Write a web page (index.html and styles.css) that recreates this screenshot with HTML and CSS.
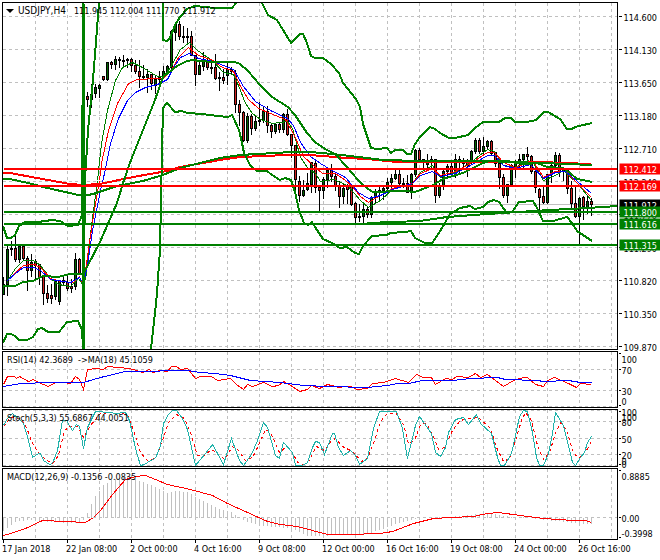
FILE: index.html
```html
<!DOCTYPE html>
<html lang="en">
<head>
  <meta charset="UTF-8" />
  <meta name="viewport" content="width=device-width, initial-scale=1.0" />
  <title>USDJPY,H4</title>
  <link rel="stylesheet" href="styles.css">
</head>
<body>
  <main class="chart">
    <section class="panel price">
      <div class="plot">
        <h1 class="caption"><svg class="arrow" viewBox="0 0 8 4"><path d="M0 0H8L4 4Z" /></svg><span class="symbol">USDJPY,H4</span> <span>111.945 112.004 111.770 111.912</span></h1>
        <svg class="canvas" viewBox="2.5 2.5 614 346" preserveAspectRatio="none">
          <g class="grid" data-rows="16,49,82,115,148,181,214,247,280,313,346"></g>
          <path class="bid" d="M3 204H618" />
          <g id="candles"></g>
          <!-- moving averages -->
          <polyline class="thin green" points="7,280 15,268 23,260 33,260 40,265 50,278 58,284 70,286 78,278 83,285 86,273 90,233 97,180 101,143 107,110 115,80 122,67 132,62 142,67 157,76 163,76 170,67 180,49 189,42 197,50 213,61 223,72 233,74 238,85 245,103 252,113 260,119 272,123 287,121 292,128 300,157 307,167 315,173 320,181 333,179 347,185 360,200 368,207 380,200 393,188 412,183 420,172 432,165 440,177 455,172 470,162 487,149 494,151 503,165 515,167 528,160 533,163 543,180 555,175 563,170 577,183 591,200" />
          <polyline class="thin red" points="7,280 15,272 23,265 33,264 40,267 50,278 60,281 73,282 79,276 83,285 87,256 93,215 99,180 101,163 108,130 117,103 128,83 137,79 157,78 163,78 172,68 178,57 188,47 198,55 213,60 220,66 233,71 240,86 248,99 258,108 270,113 285,119 293,133 303,156 313,165 322,173 335,173 345,180 352,186 360,196 368,202 378,196 392,188 412,183 420,173 432,168 440,175 455,171 470,163 487,152 494,152 503,162 515,167 528,162 534,163 543,177 555,171 565,171 577,183 591,197" />
          <polyline class="thin blue" points="7,280 15,273 23,267 33,267 40,270 50,279 70,282 79,277 83,283 87,265 92,230 100,190 104,173 110,143 118,118 127,100 135,92 145,87 157,84 167,79 173,67 180,57 189,53 198,58 213,61 233,69 243,86 255,101 270,110 287,118 293,125 300,142 310,156 320,163 330,169 345,177 358,192 368,198 380,195 392,189 412,183 420,175 432,171 440,176 455,173 470,165 487,155 494,155 503,165 515,168 530,164 543,178 555,172 565,171 577,181 591,193" />
          <g transform="translate(-.5 -.5)">
            <polyline class="thick red" points="3,173 10,173 37,178 70,184 83,185 100,184 133,177 167,171 180,167 220,160 240,157 287,155 310,155 347,158 367,159 397,162 480,162 540,162 591,164" />
            <polyline class="thick green" points="3,179 10,179 28,183 43,187 83,196 93,194 117,186 143,181 163,175 180,168 200,163 220,158 240,155 292,152 310,152 333,154 367,158 383,160 420,161 483,161 543,163 592,165" />
            <!-- Bollinger bands -->
            <polyline class="thick green" points="3,226 7,238 11,238 15,235 19,226 25,222 38,222 52,220 60,221 68,226 78,225 82,215 83,3" />
            <polyline class="thick green" points="84,275 85,180 88,130 93,80 99,3" />
            <polyline class="thick green" points="163,3 163,40 167,41 170,38 175,25 180,17 187,9 195,6 215,8 232,8 236,3" />
            <polyline class="thick green" points="262,3 268,15 277,20 291,43 300,34 303,34 307,43 311,56 315,58 323,58 331,64 339,73 343,83 356,99 360,107 363,124 371,148 377,149 387,148 391,153 395,150 403,150 407,154 411,154 415,144 420,137 430,127 435,129 440,133 449,138 455,138 468,135 475,128 483,122 499,122 505,118 511,118 515,122 527,122 536,120 544,112 548,112 560,119 567,129 572,129 575,127 592,123" />
            <polyline class="thick green" points="3,286 15,286 23,282 33,281 43,276 58,277 70,274 83,274 87,267 100,242 117,203 124,180 131,160 143,130 155,100 163,77 168,73 177,66 187,61 193,60 200,61 213,62 235,62 240,64 248,71 260,85 272,97 288,107 295,115 307,133 315,142 325,149 335,154 347,167 358,180 368,189 373,192 400,191 405,191 415,192 433,185 443,179 463,173 473,168 483,163 490,161 507,161 517,163 527,164 537,163 547,167 563,168 570,173 577,179 583,180 592,182" />
            <polyline class="thick green" points="3,343 7,334 11,334 15,336 19,340 27,340 33,337 38,329 42,328 48,332 59,332 67,322 78,321 82,330 83,348" />
            <polyline class="thick green" points="151,349 155,313 157,293 160,250 161,200 162,150 163,108 167,103 175,112 182,111 187,113 202,114 218,116 228,117 232,115 234,119 239,130 242,143 244,153 250,165 257,171 267,171 272,175 280,180 285,178 291,180 295,192 299,210 304,223 308,225 312,222 315,227 323,239 332,243 340,248 347,247 355,253 359,254 363,246 372,236 387,235 390,233 405,232 411,231 415,238 425,243 432,243 435,239 442,228 450,214 460,208 470,206 475,209 483,207 488,202 494,200 499,202 504,209 507,213 512,212 519,202 533,201 537,208 543,221 553,221 567,217 572,223 577,231 592,241" />
            <path class="thick green" d="M367 223L420 221L447 217L487 214L550 210L587 208L618 206" />
          </g>
          <path class="spike" d="M83 3V349" />
          <!-- support and resistance -->
          <path class="thick red" d="M3 168H618M3 185H618" />
          <path class="thick green" d="M3 211H618M3 223H618M3 244H618" />
        </svg>
      </div>
      <svg class="scale" viewBox="617.5 1.5 42 348">
        <path class="tick" d="M618 16h3M618 49h3M618 82h3M618 115h3M618 148h3M618 181h3M618 214h3M618 247h3M618 280h3M618 313h3M618 346h3" />
        <text x="623" y="20">114.600</text>
        <text x="623" y="53">114.130</text>
        <text x="623" y="86">113.650</text>
        <text x="623" y="119">113.180</text>
        <text x="623" y="152">112.710</text>
        <text x="623" y="185">112.240</text>
        <text x="623" y="218">111.770</text>
        <text x="623" y="251">111.290</text>
        <text x="623" y="284">110.820</text>
        <text x="623" y="317">110.350</text>
        <text x="623" y="350">109.870</text>
        <rect class="fill-black" x="619" y="199" width="42" height="11" />
        <text class="tag" x="623" y="208">111.912</text>
        <rect class="fill-red" x="619" y="163" width="42" height="11" />
        <text class="tag" x="623" y="172">112.412</text>
        <rect class="fill-red" x="619" y="180" width="42" height="11" />
        <text class="tag" x="623" y="189">112.169</text>
        <rect class="fill-green" x="619" y="206" width="42" height="11" />
        <text class="tag" x="623" y="215">111.800</text>
        <rect class="fill-green" x="619" y="218" width="42" height="11" />
        <text class="tag" x="623" y="227">111.616</text>
        <rect class="fill-green" x="619" y="239" width="42" height="11" />
        <text class="tag" x="623" y="248">111.315</text>
      </svg>
    </section>

    <section class="panel rsi">
      <div class="plot">
        <h2 class="caption">RSI(14) 42.3689&nbsp; -&gt;MA(18) 45.1059</h2>
        <svg class="canvas" viewBox="2.5 351.5 614 55" preserveAspectRatio="none">
          <g class="grid" data-rows="369,390,406"></g>
          <polyline class="thin red" points="3,384 7,376 14,376 16,378 19,376 28,381 33,379 38,382 43,384 48,386 55,382 63,382 70,383 75,376 79,379 83,389 87,369 96,368 103,369 107,366 129,368 136,370 142,372 149,369 152,372 160,370 167,371 171,366 176,366 180,369 187,368 195,378 200,376 211,376 217,380 230,378 236,384 243,389 247,384 252,386 263,382 272,386 278,385 283,381 292,386 299,391 307,389 311,385 319,388 327,384 339,387 343,386 350,386 357,389 367,388 372,383 383,382 395,378 408,382 416,374 423,377 431,377 435,384 445,378 452,379 456,376 468,377 475,373 480,377 487,374 495,380 503,386 513,380 523,377 527,377 535,384 543,386 547,380 554,377 568,383 576,387 580,383 591,384" />
          <polyline class="line blue" points="3,386 20,383 50,382 83,382 100,377 125,371 150,371 170,370 187,370 200,372 215,373 230,375 250,380 280,382 303,385 327,386 367,387 387,385 397,383 408,383 422,380 452,380 470,378 497,377 505,379 537,380 543,381 568,380 580,382 591,382" />
        </svg>
      </div>
      <svg class="scale" viewBox="617.5 350.5 42 57">
        <path class="tick" d="M618 353h2M618 369h2M618 390h2M618 405h2" />
        <text x="621" y="362">100</text>
        <text x="621" y="373">70</text>
        <text x="621" y="394">30</text>
        <text x="621" y="404">0</text>
      </svg>
    </section>

    <section class="panel stoch">
      <div class="plot">
        <h2 class="caption">Stoch(5,3,3) 55.6867 44.0051</h2>
        <svg class="canvas" viewBox="2.5 409.5 614 56" preserveAspectRatio="none">
          <g class="grid" data-rows="410,421,438,454,465"></g>
          <polyline class="thin red dashed" points="3,426 10,417 20,418 26,427 32,443 38,452 45,459 52,463 58,455 64,430 69,426 77,426 83,437 90,425 100,413 112,412 127,414 133,430 140,452 147,460 155,458 162,440 168,422 176,414 184,418 190,432 197,455 203,456 211,449 217,453 224,459 232,446 238,450 245,460 252,457 258,445 265,429 270,432 279,452 286,446 292,452 297,462 303,464 308,461 316,446 324,450 331,440 335,438 342,446 352,451 361,461 367,458 374,440 380,421 386,414 395,412 403,424 408,443 414,440 420,424 426,423 433,436 438,449 444,447 452,430 459,421 465,418 473,418 477,416 490,428 496,447 503,461 509,458 515,440 521,420 525,412 531,420 537,445 543,459 549,452 555,433 560,422 566,430 573,452 578,458 586,450 591,441" />
          <polyline class="thin teal" points="3,425 7,418 12,413 18,418 23,423 28,440 32,457 38,453 40,453 43,460 49,464 52,463 57,450 62,420 66,420 72,430 76,424 79,426 83,448 87,427 95,411 110,412 115,413 125,412 129,420 135,448 140,465 144,464 150,460 155,458 160,445 163,423 168,414 172,410 176,410 182,418 187,429 195,465 205,453 212,444 217,453 223,464 231,438 239,460 243,465 251,454 257,440 263,422 267,427 275,455 279,458 283,442 292,452 295,465 302,465 307,462 312,447 315,441 319,442 324,454 332,433 334,433 338,447 343,455 350,450 355,455 359,464 367,458 373,428 379,411 396,411 402,428 407,458 415,425 419,416 431,433 435,452 440,456 445,447 448,432 455,419 463,417 468,424 476,414 480,423 491,433 497,457 500,465 504,465 511,453 515,435 519,416 523,410 527,411 532,432 536,457 539,465 543,465 548,453 552,433 555,412 563,425 572,462 575,465 580,457 584,452 587,442 591,436" />
        </svg>
      </div>
      <svg class="scale" viewBox="617.5 408.5 42 58">
        <path class="tick" d="M618 411h2M618 421h2M618 438h2M618 454h2M618 464h2" />
        <text x="621" y="415">100</text>
        <text x="621" y="420">100</text>
        <text x="621" y="425">80</text>
        <text x="621" y="442">50</text>
        <text x="621" y="458">20</text>
        <text x="621" y="464">0</text>
        <text x="621" y="467">0</text>
      </svg>
    </section>

    <section class="panel macd">
      <div class="plot">
        <h2 class="caption">MACD(12,26,9) -0.1356 -0.0835</h2>
        <svg class="canvas" viewBox="2.5 468.5 614 70" preserveAspectRatio="none">
          <g class="grid" data-rows="517"></g>
          <path id="histogram" />
          <polyline class="line red" points="3,535 10,533 25,528 42,520 65,521 85,522 93,517 100,510 112,494 125,479 135,476 145,475 155,479 167,484 190,489 212,495 227,503 247,512 267,521 280,524 297,526 327,534 347,534 380,533 392,531 413,523 433,518 450,517 473,516 487,513 498,512 520,515 543,518 573,520 585,520 591,522" />
        </svg>
      </div>
      <svg class="scale" viewBox="617.5 467.5 42 72">
        <path class="tick" d="M618 470h2M618 517h2M618 537h2" />
        <text x="621" y="479">0.8885</text>
        <text x="621" y="521">0.00</text>
        <text x="621" y="536">-0.3998</text>
      </svg>
    </section>

    <footer class="times">
      <span>17 Jan 2018</span>
      <span>22 Jan 08:00</span>
      <span>2 Oct 00:00</span>
      <span>4 Oct 16:00</span>
      <span>9 Oct 08:00</span>
      <span>12 Oct 00:00</span>
      <span>16 Oct 16:00</span>
      <span>19 Oct 08:00</span>
      <span>24 Oct 00:00</span>
      <span>26 Oct 16:00</span>
    </footer>
  </main>
  <script src="chart.js"></script>
</body>
</html>
```
FILE: styles.css
```css
body { margin: 0; background: #fff; color: #000; font-family: "DejaVu Sans Condensed", "Liberation Sans", Tahoma, sans-serif; font-size: 9px; line-height: 12px; }
.chart { display: flex; flex-direction: column; gap: 1px; padding: 2px 0 0 2px; }
.panel { display: grid; grid-template-columns: 1fr 42px; }
.plot { position: relative; box-sizing: border-box; border: 1px solid #000; min-width: 0; }
.price .plot, .price .scale { height: 348px; }
.rsi .plot, .rsi .scale { height: 57px; }
.stoch .plot, .stoch .scale { height: 58px; }
.macd .plot, .macd .scale { height: 72px; }
.canvas { display: block; width: 100%; height: 100%; shape-rendering: crispEdges; }
.scale { display: block; width: 42px; overflow: visible; }

.caption { position: absolute; top: 2px; left: 4px; margin: 0; font-size: 9px; line-height: 12px; font-weight: normal; white-space: nowrap; }
.price .caption { display: flex; align-items: center; gap: 4px; left: 3px; }
.symbol { font-size: 10px; margin-right: 4px; }
.arrow { width: 8px; height: 4px; }

.canvas path, .canvas polyline { fill: none; stroke-width: 1; }
.canvas .thick { stroke-width: 2; }
.canvas .spike { stroke: #008000; stroke-width: 3; }
.canvas .bid { stroke: #c0c0c0; }
.canvas .grid path { stroke: #c0c0c0; stroke-dasharray: 3 3; }
.canvas .dashed { stroke-dasharray: 3 3; }
.green { stroke: #008000; }
.red { stroke: #f00; }
.blue { stroke: #00f; }
.teal { stroke: #20b2aa; }
#histogram { stroke: #c0c0c0; }
#candles .wick, #candles .body { stroke: #000; }
#candles .body { stroke-width: 3; }
#candles .up { stroke: #006400; }
#candles .down { stroke: #d02020; }

.tick { stroke: #000; shape-rendering: crispEdges; }
.tag { fill: #fff; }
.fill-black { fill: #000; }
.fill-red { fill: #f00; }
.fill-green { fill: #008000; }

.times { display: grid; grid-template-columns: repeat(9, 64fr) 82fr; white-space: nowrap; margin-top: -1px; }
.times span { min-width: 0; }
.times span::before { content: ""; display: block; width: 1px; height: 3px; margin-left: 1px; background: #000; }
```
FILE: chart.js
```js
const STEP = 4;
const FIRST = 3;

// high, low, body top, body bottom, up (1) or down (0)
const candles = [
  [276,294,284,294,1],[243,295,249,284,1],[240,255,248,249,0],[235,261,248,259,0],[245,262,246,259,1],
  [243,259,246,258,0],[255,290,258,270,0],[253,276,262,270,1],[258,279,261,265,0],[263,284,264,277,0],
  [274,304,276,293,0],[284,302,293,298,0],[283,303,295,298,0],[279,299,281,296,1],[279,304,281,301,1],
  [274,285,280,282,0],[273,290,282,288,0],[278,292,286,288,0],[252,289,259,286,1],[257,274,259,273,0],
  [339,341,339,341,0],
  [91,106,96,99,0],[83,107,94,99,1],[83,97,87,93,1],[83,97,85,88,1],[75,80,76,79,0],
  [61,80,62,79,1],[60,68,62,64,0],[55,69,59,64,1],[56,67,59,60,0],[54,67,60,61,0],
  [57,67,59,60,0],[57,71,59,65,0],[59,73,65,71,0],[59,87,71,76,0],[64,79,76,77,0],
  [68,92,74,77,1],[73,89,74,83,0],[74,93,79,85,1],[70,88,77,79,1],[65,78,71,77,1],
  [64,74,66,71,1],[29,68,31,67,1],[22,40,24,32,1],[20,39,24,36,0],[25,42,36,37,0],
  [27,43,36,37,0],[30,55,36,55,0],[54,85,55,74,0],[60,74,65,74,1],[51,70,61,66,1],
  [57,69,61,67,0],[60,73,67,68,0],[53,79,67,78,0],[71,90,77,78,0],[68,83,77,80,0],
  [62,84,69,75,1],[66,74,69,71,0],[69,112,73,104,0],[99,125,104,112,0],[110,141,112,140,0],
  [112,142,116,140,1],[113,134,116,128,0],[115,130,121,128,1],[101,125,120,121,0],[105,122,111,120,1],
  [105,132,111,125,0],[123,137,125,131,0],[122,133,124,131,1],[121,132,124,129,0],[112,132,114,129,1],
  [108,135,114,134,0],[134,157,134,145,0],[144,192,145,179,0],[175,201,181,195,0],[179,196,190,195,1],
  [172,190,183,189,1],[161,192,162,184,1],[160,192,163,187,0],[185,211,187,190,0],[176,198,179,190,1],
  [168,187,170,179,1],[163,181,170,176,0],[173,190,176,185,0],[180,207,185,196,0],[183,203,188,196,1],
  [183,203,186,189,0],[186,205,186,204,0],[201,224,203,217,0],[203,221,216,217,0],[203,222,209,216,1],
  [205,217,209,214,0],[195,217,197,214,1],[188,203,191,197,1],[186,200,190,191,0],[185,199,188,190,1],
  [177,194,182,188,1],[173,190,178,182,1],[169,179,174,178,1],[169,187,174,183,0],[177,187,183,184,0],
  [174,192,183,192,0],[172,198,174,192,1],[148,176,150,174,1],[147,161,150,159,0],[158,167,159,162,0],
  [153,168,161,164,1],[155,167,159,161,0],[158,202,159,195,0],[182,197,185,195,1],[168,189,171,185,1],
  [163,177,166,171,1],[160,175,166,173,0],[153,177,159,172,1],[155,173,159,162,0],[157,167,162,163,0],
  [158,176,162,165,0],[149,163,151,162,1],[137,153,140,151,1],[137,153,140,151,0],[136,153,146,151,1],
  [139,148,141,146,1],[139,155,141,153,0],[151,166,152,163,0],[162,188,163,177,0],[173,197,177,195,0],
  [183,202,184,195,1],[163,186,165,184,1],[159,177,162,168,1],[153,167,159,162,1],[153,168,154,159,1],
  [146,162,154,156,0],[154,173,156,171,0],[163,192,171,187,0],[187,212,189,197,0],[186,203,196,202,0],
  [173,203,174,202,1],[163,182,165,174,1],[151,167,155,165,1],[152,176,155,171,0],[167,180,169,171,1],
  [167,193,170,188,0],[180,208,188,203,0],[185,217,203,216,0],[196,243,198,216,1],[195,219,197,206,0],
  [195,213,201,207,1],[197,215,201,204,0]
];

// x, bar end
const macd = [
  [3,530],[7,527],[11,524],[15,521],[27,519],[51,521],[75,522],[83,519],[87,512],[91,503],[95,495],
  [103,484],[111,479],[127,475],[143,481],[155,486],[167,492],[175,490],[187,491],[203,500],[211,504],
  [219,508],[231,511],[239,516],[247,521],[263,525],[287,527],[297,530],[307,535],[350,534],[370,532],
  [383,528],[395,523],[415,518],[423,517],[443,516],[463,515],[475,513],[491,512],[503,515],[531,517],
  [543,519],[555,520],[583,523],[591,523]
];

document.querySelectorAll(".grid").forEach(g => {
  const [left, top, width, height] = g.parentNode.getAttribute("viewBox").split(" ").map(Number);
  let html = "";
  for (let x = 35; x < left + width; x += 32) {
    html += `<path d="M${x} ${top}v${height}" />`;
  }
  g.dataset.rows.split(",").forEach(y => {
    html += `<path d="M${left} ${y}h${width}" />`;
  });
  g.innerHTML = html;
});

document.getElementById("candles").innerHTML = candles.map(([high, low, top, bottom, up], i) => {
  const x = FIRST + i * STEP;
  let html = `<path class="wick" d="M${x} ${high}V${low}" />`;
  html += `<path class="body" d="M${x} ${top - 0.5}V${bottom + 0.5}" />`;
  if (bottom - top > 1) {
    html += `<path class="${up ? "up" : "down"}" d="M${x} ${top + 0.5}V${bottom - 0.5}" />`;
  }
  return html;
}).join("");

function macdAt(x) {
  const i = Math.max(1, macd.findIndex(p => p[0] >= x));
  const [x0, y0] = macd[i - 1];
  const [x1, y1] = macd[i];
  return Math.round(y0 + (y1 - y0) * (x - x0) / (x1 - x0));
}

document.getElementById("histogram").setAttribute("d",
  candles.map((c, i) => `M${FIRST + i * STEP} 517V${macdAt(FIRST + i * STEP)}`).join(""));
```
